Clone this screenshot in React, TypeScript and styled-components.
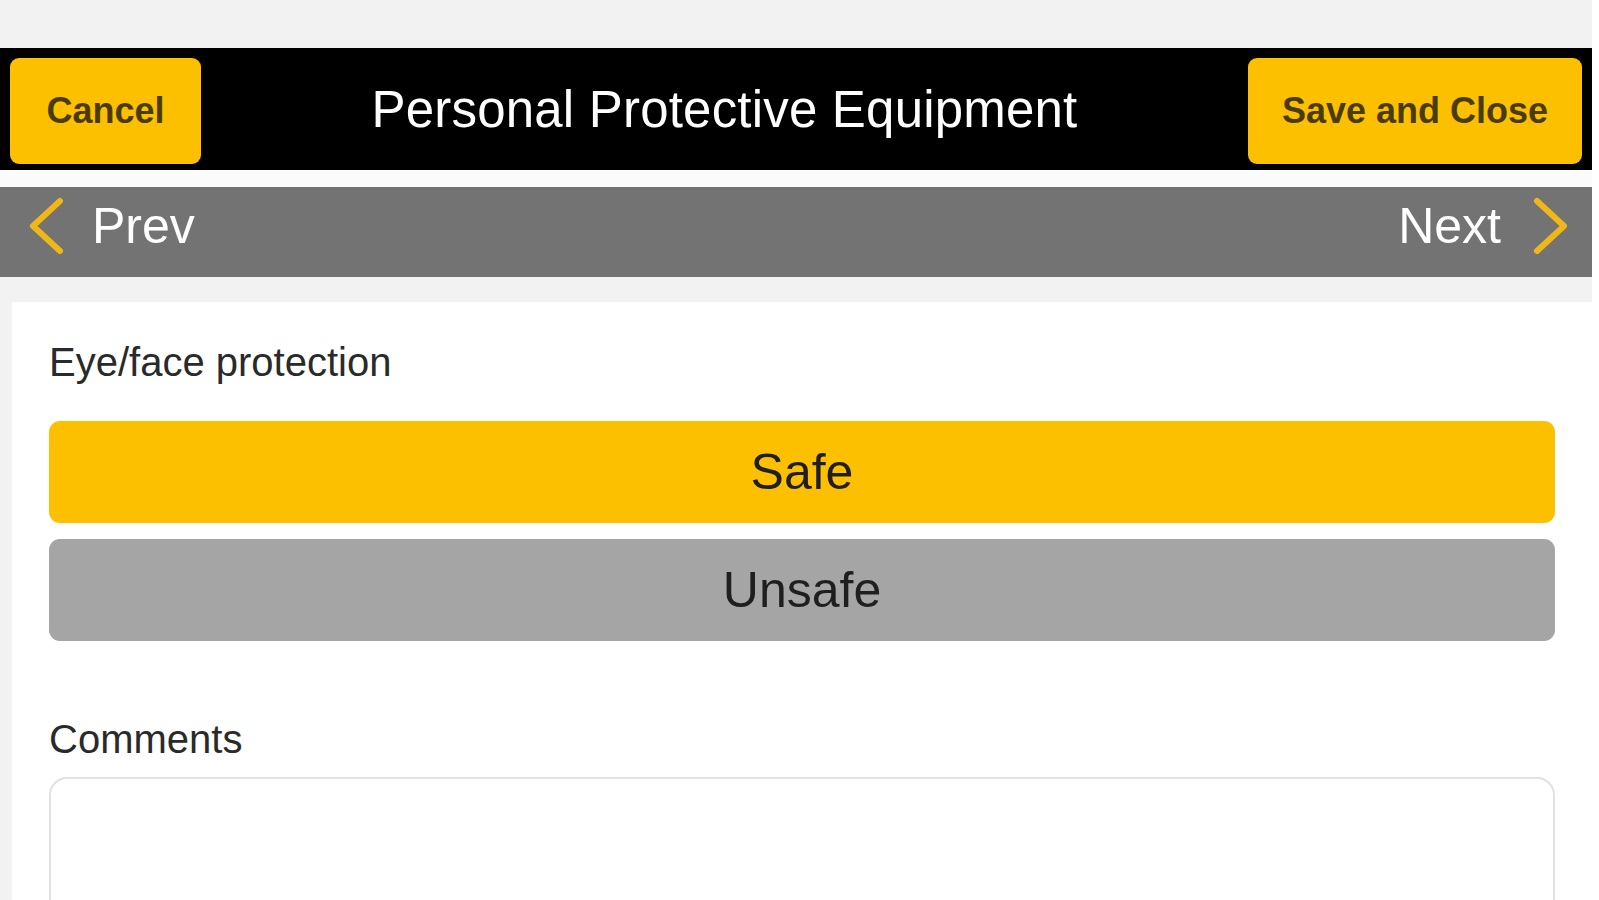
import { createGlobalStyle } from 'styled-components';
import styled from 'styled-components';

const GlobalStyle = createGlobalStyle`
  html, body {
    margin: 0;
    padding: 0;
    background: #ffffff;
    overflow: hidden;
    height: 100%;
  }
  body {
    font-family: "Liberation Sans", Arial, sans-serif;
  }
`

const Screen = styled.div`
  width: 1592px;
  height: 900px;
  background: #f2f2f2;
  padding-top: 48px;
  box-sizing: border-box;
  display: flex;
  flex-direction: column;
  overflow: hidden;
`

const TopBar = styled.div`
  flex-shrink: 0;
  height: 122px;
  background: #000;
  display: flex;
  align-items: center;
  padding: 0 10px;
  border-bottom: 17px solid #fbfbfb;
`

const BarButton = styled.button<{ $width: number }>`
  width: ${p => p.$width}px;
  height: 106px;
  margin-top: 3px;
  border: none;
  border-radius: 9px;
  background: #fcc000;
  color: #4a3c00;
  font-family: "Liberation Sans", Arial, sans-serif;
  font-weight: bold;
  font-size: 36px;
  display: flex;
  align-items: center;
  justify-content: center;
  padding: 0;
  flex-shrink: 0;
`

const Title = styled.div`
  flex: 1;
  text-align: center;
  color: #fff;
  font-size: 51px;
  letter-spacing: 0.2px;
`

const NavBar = styled.div`
  flex-shrink: 0;
  height: 90px;
  box-sizing: border-box;
  background: #737373;
  display: flex;
  align-items: center;
  justify-content: space-between;
  padding: 0 19px 12px 24px;
`

const NavLink = styled.div<{ $gap: number }>`
  display: flex;
  align-items: center;
  gap: ${p => p.$gap}px;
  color: #fff;
  font-size: 50px;
`

const Card = styled.div`
  flex: 1;
  min-height: 0;
  margin: 25px 0 0 12px;
  background: #fff;
  padding: 36px 37px 0 37px;
  display: flex;
  flex-direction: column;
`

const FieldLabel = styled.div<{ $gap: number }>`
  flex-shrink: 0;
  font-size: 40px;
  line-height: 48px;
  color: #2a2a2a;
  margin-bottom: ${p => p.$gap}px;
`

const Choice = styled.div<{ $selected?: boolean }>`
  flex-shrink: 0;
  height: 102px;
  border-radius: 11px;
  background: ${p => (p.$selected ? '#fdc000' : '#a5a5a5')};
  color: #1f1f1f;
  font-size: 50px;
  display: flex;
  align-items: center;
  justify-content: center;
  margin-bottom: 16px;
`

const Spacer = styled.div`
  flex-shrink: 0;
  height: 58px;
`

const CommentBox = styled.textarea`
  flex-shrink: 0;
  height: 180px;
  border: 2px solid #e2e2e2;
  border-radius: 18px;
  background: #fff;
  resize: none;
  outline: none;
`

function Chevron({ dir }: { dir: 'left' | 'right' }) {
  const pts = dir === 'left' ? '36,6 9,31 36,56' : '4,6 31,31 4,56';
  return (
    <svg width="40" height="62" viewBox="0 0 40 62">
      <polyline points={pts} fill="none" stroke="#efb717" strokeWidth="6" strokeLinecap="round" strokeLinejoin="round" />
    </svg>
  );
}

function App() {
  return (
    <>
      <GlobalStyle />
      <Screen>
        <TopBar>
          <BarButton $width={191}>Cancel</BarButton>
          <Title>Personal Protective Equipment</Title>
          <BarButton $width={334}>Save and Close</BarButton>
        </TopBar>
        <NavBar>
          <NavLink $gap={28}>
            <Chevron dir="left" />
            <span>Prev</span>
          </NavLink>
          <NavLink $gap={32}>
            <span>Next</span>
            <Chevron dir="right" />
          </NavLink>
        </NavBar>
        <Card>
          <FieldLabel $gap={35}>Eye/face protection</FieldLabel>
          <Choice $selected>Safe</Choice>
          <Choice>Unsafe</Choice>
          <Spacer />
          <FieldLabel $gap={14}>Comments</FieldLabel>
          <CommentBox />
        </Card>
      </Screen>
    </>
  );
}

export default App;
